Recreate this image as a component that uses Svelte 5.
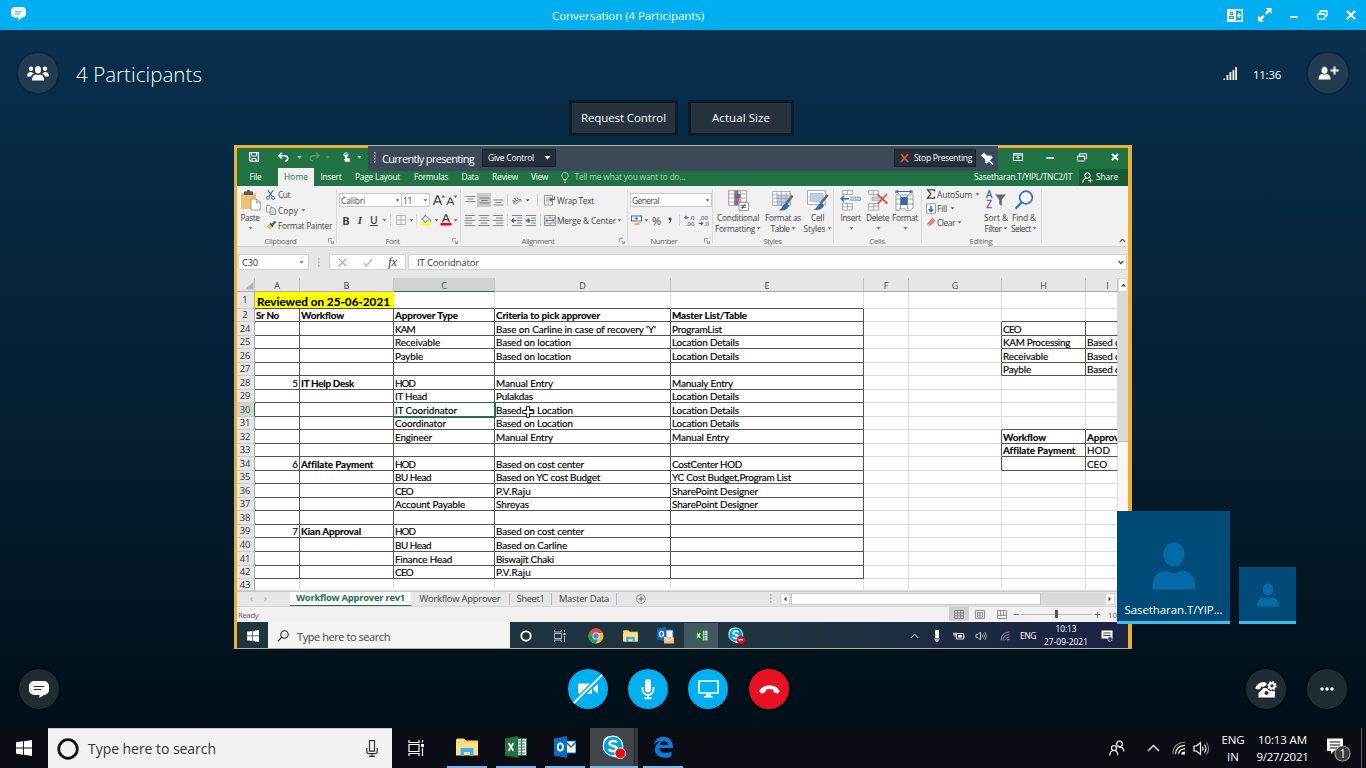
<script>
  // Spreads the letters of a label over a given width.
  function fit(node, width) {
    if (!width) return;
    const natural = node.getBoundingClientRect().width;
    node.style.letterSpacing = (width - natural) / node.textContent.length + 'px';
  }

  // name: [width, height, markup]
  const icons = {
    caret: [5, 3, '<path d="M.5.2h4L2.5 2.6z" fill="#666"/>'],
    caretW: [5, 3, '<path d="M.5.2h4L2.5 2.6z" fill="#fff"/>'],
    caretF: [5, 3, '<path d="M.5.2h4L2.5 2.6z" fill="#4f9470"/>'],
    caretL: [7, 4, '<path d="M.5 0h6L3.5 3.6z" fill="#fff"/>'],
    vsep: [1, 12, '<path d="M.5 0v12" stroke="#d8d8d8"/>'],
    launch: [6, 6, '<path d="M.5 4V.5H4M2.5 2.5l3 3M5.500 3v2.500H3" fill="none" stroke="#888" stroke-width=".8"/>'],
    save: [10, 10, '<path d="M.6.6h8.800v8.800H2L.6 8z" fill="none" stroke="#fff" stroke-width="1.200"/><path d="M2.500 1v3h5V1M3 9V6.500h4V9" fill="none" stroke="#fff"/>'],
    undo: [11, 10, '<path d="M4 .8 1 3.800l3 3M1.300 3.800H6c5 0 4.500 5 1 5.200" fill="none" stroke="#fff" stroke-width="1.600"/>'],
    redo: [11, 10, '<path d="M7 .8l3 3-3 3M9.700 3.800H5C0 3.800.5 8.800 4 9" fill="none" stroke="#4f9470" stroke-width="1.400"/>'],
    touch: [9, 11, '<circle cx="4" cy="2.800" r="2" fill="none" stroke="#fff" stroke-width="1"/><path d="M3.200 2.500h1.600v3.300L8 6.600 7.500 10H3.500L1.500 7l1.700.3z" fill="#fff"/>'],
    ropt: [10, 8, '<path d="M.5.5h9v7h-9zM.5 2h9" fill="none" stroke="#fff"/><path d="M5 6.500V3.500M3.500 5 5 3.500 6.500 5" fill="none" stroke="#fff"/>'],
    min: [8, 8, '<path d="M0 5h8" stroke="#fff" stroke-width="1.500"/>'],
    rest: [10, 9, '<path d="M2.500 2.500V.8h7v4.700H7.500M.5 3h7v5h-7z" fill="none" stroke="#fff" stroke-width="1"/><path d="M.5 3.500h7" stroke="#fff"/>'],
    close: [8, 8, '<path d="M1 1l6 6M7 1 1 7" stroke="#fff" stroke-width="1.900"/>'],
    bulb: [8, 11, '<path d="M2.500 7.500C2.500 6 .8 5.500.8 3.700a3.200 3.200 0 0 1 6.400 0C7.200 5.500 5.500 6 5.500 7.500zM2.700 8.900h2.600M3 10.300h2" fill="none" stroke="#a9d0b9" stroke-width=".9"/>'],
    share: [11, 11, '<circle cx="5.500" cy="3.500" r="2.700" fill="none" stroke="#fff"/><path d="M.8 10.500c0-3 2-4 4-4.300M6 8.500h4.500M8.200 6.300v4.500" fill="none" stroke="#fff"/>'],
    paste: [21, 21, '<path d="M1 3h15v16H1z" fill="#eec074"/><path d="M4 1.500h2.500L7.500 0h2l1 1.500H13V5H4z" fill="#5d5d5d"/><path d="M11 9h5.500l4 3.500V20H11z" fill="#fff" stroke="#8a8a8a" stroke-width=".8"/><path d="M16.300 9v3.700h4" fill="none" stroke="#8a8a8a" stroke-width=".8"/>'],
    cut: [9, 10, '<path d="M1.800.3 6.300 6.500M7.200.3 2.700 6.500" stroke="#555" stroke-width="1.100"/><circle cx="2" cy="7.800" r="1.500" fill="none" stroke="#3f78b5"/><circle cx="7" cy="7.800" r="1.500" fill="none" stroke="#3f78b5"/>'],
    copy: [10, 10, '<path d="M.5.5H4l1.500 1.500v5H.5z" fill="#fff" stroke="#6b88a8" stroke-width=".8"/><path d="M4.200 3H8l1.500 1.500v5H4.200z" fill="#fff" stroke="#4d7fb4" stroke-width=".8"/><path d="M5.300 5.500h3M5.300 7.300h3" stroke="#4d7fb4" stroke-width=".6"/>'],
    painter: [10, 9, '<path d="M9.500.5 6.500 3.500" stroke="#555" stroke-width="2"/><path d="M4 2.500 7 5.500" stroke="#444" stroke-width="1.800"/><path d="M3.500 3 6.300 6 4 8.500.3 5.500z" fill="#e9b36a"/>'],
    grow: [14, 12, '<path d="M1.500 11 5.200 2h.8L9.700 11M2.800 7.900h5.600" fill="none" stroke="#444" stroke-width="1.300"/><path d="M9.200 3.500h4L11.200 1z" fill="#2b6cb5"/>'],
    shrink: [12, 12, '<path d="M1 11 4 4h.8L7.800 11M2.200 8.500h4.400" fill="none" stroke="#444" stroke-width="1.200"/><path d="M7.500 1.500h4L9.500 4z" fill="#2b6cb5"/>'],
    comma: [4, 7, '<path d="M2 .5a1.400 1.400 0 0 1 1.500 1.600C3.500 4 2.500 5.500 1 6.500L.6 6C1.500 5.200 2 4.300 2 3.400A1.400 1.400 0 0 1 2 .5z" fill="#444"/>'],
    bord: [10, 10, '<path d="M.5.5h9v9h-9zM5 .5v9M.5 5h9" fill="none" stroke="#aaa" stroke-width=".8"/>'],
    fill: [12, 12, '<path d="M5.500 1.500 9.500 5 5.500 8.500 2 5z" fill="#fff" stroke="#666" stroke-width=".9"/><path d="M5 .5v3" stroke="#666" stroke-width=".8"/><path d="M10.300 4.500 11.300 7.500h-1.600z" fill="#3f78b5"/><path d="M.5 9h11v2.500H.5z" fill="#ff0"/>'],
    fcol: [12, 12, '<path d="M2.500 8.300 5.500 1h1L9.500 8.300M3.700 5.600h4.600" fill="none" stroke="#444" stroke-width="1.300"/><path d="M.5 9h11v2.500H.5z" fill="#f00"/>'],
    vtop: [11, 11, '<path d="M.5 1.500h10M2.500 4h6M.5 6.500h10" stroke="#777" fill="none" stroke-width=".9"/>'],
    vmid: [11, 11, '<path d="M.5 3h10M2.500 5.500h6M.5 8h10" stroke="#777" stroke-width=".9"/>'],
    vbot: [11, 11, '<path d="M.5 5h10M2.500 7.500h6M.5 10h10" stroke="#777" stroke-width=".9"/>'],
    al: [10, 11, '<path d="M0 .5h10M0 3h7M0 5.500h10M0 8h7M0 10.500h10" stroke="#777" stroke-width=".9"/>'],
    ac: [10, 11, '<path d="M0 .5h10M1.500 3h7M0 5.500h10M1.500 8h7M0 10.500h10" stroke="#777" stroke-width=".9"/>'],
    ar: [10, 11, '<path d="M0 .5h10M3 3h7M0 5.500h10M3 8h7M0 10.500h10" stroke="#777" stroke-width=".9"/>'],
    orient: [10, 10, '<text x="0" y="7" font-size="6.500" transform="rotate(-40 4 6)" fill="#444" font-family="Open Sans">ab</text><path d="M3.500 9.500 9 4.500M9 7V4.500H6.500" fill="none" stroke="#777" stroke-width=".8"/>'],
    indo: [12, 11, '<path d="M1 .5h10M6 3h5M6 5.500h5M6 8h5M1 10.500h10" stroke="#777" stroke-width=".9"/><path d="M4.800 5.500H1M2.700 3.500.8 5.500l1.900 2" fill="none" stroke="#2b6cb5" stroke-width="1.300"/>'],
    indi: [12, 11, '<path d="M1 .5h10M6 3h5M6 5.500h5M6 8h5M1 10.500h10" stroke="#777" stroke-width=".9"/><path d="M.5 5.500h4M2.700 3.500l1.900 2-1.900 2" fill="none" stroke="#2b6cb5" stroke-width="1.300"/>'],
    wrap: [12, 11, '<path d="M.5.5h8v9.500h-8zM2 3h5M2 5h5M2 7h3" fill="#fff" stroke="#777" stroke-width=".8"/><path d="M10.500 1.500v3H6M7.700 3 6 4.500l1.700 2" fill="none" stroke="#2b6cb5" stroke-width="1.200"/>'],
    merge: [12, 11, '<path d="M.5.5h11v10H.5zM.5 3h11M.5 8h11M6 .5V3M6 8v2.500" fill="#fff" stroke="#777" stroke-width=".8"/><path d="M2 5.500h8M3.500 4 2 5.500 3.500 7M8.500 4 10 5.500 8.500 7" fill="none" stroke="#2b6cb5" stroke-width=".9"/>'],
    money: [12, 11, '<path d="M.5 1h10v5H.5z" fill="#fff" stroke="#2b6cb5" stroke-width="1.200"/><circle cx="5.500" cy="3.500" r="1.300" fill="#2b6cb5"/><ellipse cx="8.500" cy="6.500" rx="2.500" ry="1.100" fill="#eeb65f"/><ellipse cx="6" cy="9" rx="3" ry="1.300" fill="#eeb65f"/>'],
    dinc: [12, 11, '<path d="M.8 2.500h4M2.500 1 .8 2.500 2.500 4" fill="none" stroke="#2b6cb5" stroke-width="1.100"/><text x="5.500" y="5" font-size="6" fill="#222" font-family="Open Sans">.0</text><text x="2" y="10.500" font-size="6" fill="#222" font-family="Open Sans">.00</text>'],
    ddec: [12, 11, '<path d="M.5 8.500h4M3 7l1.700 1.500L3 10" fill="none" stroke="#2b6cb5" stroke-width="1.100"/><text x="1.500" y="5" font-size="6" fill="#222" font-family="Open Sans">.00</text><text x="6" y="10.500" font-size="6" fill="#222" font-family="Open Sans">.0</text>'],
    cond: [21, 21, '<path d="M.5.5h18v15H.5zM.5 4h18M.5 8h18M.5 12h18M6.500.5v15M12.500.5v15" fill="#fff" stroke="#999" stroke-width=".8"/><path d="M6.500.5h4v3.500h-4zM6.500 8h5v4h-5z" fill="#e0563a"/><path d="M6.500 4h6v4h-6zM6.500 12h4v3h-4z" fill="#3f78c5"/><path d="M11 12.500h9.500v8H11z" fill="#fff" stroke="#888" stroke-width=".8"/><path d="M13 15.500h5M13 17.500h5M17 13.800l-3 5.500" stroke="#444" stroke-width=".8"/>'],
    ftab: [22, 21, '<path d="M.5 1.500h18v14H.5z" fill="#fff"/><path d="M5 5h13.500v10.500H5z" fill="#b8d0ea"/><path d="M.5 1.500h18v14H.5zM.5 5h18M.5 8.500h18M.5 12h18M5 1.500v14M9.500 1.500v14M14 1.500v14" fill="none" stroke="#999" stroke-width=".7"/><path d="M20.500 5.500 14 14" stroke="#666" stroke-width="2.600"/><path d="M14 13l3 2.500c-1 4-5 5.500-10.500 5C10 19 11 14 14 13z" fill="#2b6cb5"/>'],
    cell: [22, 21, '<path d="M.5.5h18v14H.5z" fill="#fff" stroke="#999" stroke-width=".8"/><path d="M3 3.500h13v8H3z" fill="#b8d0ea" stroke="#9ab" stroke-width=".6"/><path d="M20.500 5 14 13" stroke="#666" stroke-width="2.600"/><path d="M14 12.500l3 2.500c-1 4-5 5.500-10.500 5C10 18.500 11 13.500 14 12.500z" fill="#2b6cb5"/>'],
    ins: [21, 21, '<path d="M2.500.5h10v4h-10zM7.500.5v4M2.500 13.500h10v6.500h-10zM2.500 16.700h10M7.500 13.500V20" fill="#fff" stroke="#999" stroke-width=".8"/><path d="M10.500 7h10v3.500h-10zM15.500 7v3.500" fill="#b8d0ea" stroke="#8aa" stroke-width=".7"/><path d="M9 8.800H1.500M4 6 1.200 8.800 4 11.500" fill="none" stroke="#2b6cb5" stroke-width="1.400"/>'],
    del: [21, 21, '<path d="M1.500.5h10v4h-10zM6.500.5v4M1.500 13.500h10v6.500h-10zM1.500 16.700h10M6.500 13.500V20" fill="#fff" stroke="#999" stroke-width=".8"/><path d="M5 7h10v3.500H5z" fill="#b8d0ea" stroke="#8aa" stroke-width=".7"/><path d="M10.500 4.500l10 9M20 4l-9.500 10" stroke="#d9532c" stroke-width="1.700"/>'],
    fmt: [20, 21, '<path d="M1.500 1.500h15M1 0v3.500M17 0v3.500M3.500 0 1.500 1.700l2 1.700M14.500 0l2 1.700-2 1.700" fill="none" stroke="#2b6cb5" stroke-width="1"/><path d="M1 5h17v13l-3 2.500H11L10 19H5l-1 1.500H1zM1 9h17M1 14h17M5.500 5v14M12.500 5v14" fill="#fff" stroke="#888" stroke-width=".8"/><path d="M5.500 7h7v8h-7z" fill="#2b6cb5"/>'],
    sum: [10, 10, '<path d="M8.500 2.500V.8H1.500L5 5 1.500 9.200h7V7.500" fill="none" stroke="#444" stroke-width="1.300"/>'],
    filld: [10, 11, '<path d="M.5.8h9v9.500h-9z" fill="#fff" stroke="#888" stroke-width=".8"/><path d="M5 3v5.500M2.800 6 5 8.500 7.200 6" fill="none" stroke="#2b6cb5" stroke-width="1.500"/>'],
    clr: [11, 10, '<path d="M1 6.500 6.500.8l3.200 2.700-5.500 5.700H2.500z" fill="#e8818d"/><path d="M1 6.500l3 2.700" stroke="#fff" stroke-width=".7"/>'],
    sort: [22, 19, '<text x="1" y="8" font-size="10" fill="#2b6cb5" stroke="#2b6cb5" stroke-width=".3" font-family="Open Sans">A</text><text x="1.300" y="18" font-size="10" fill="#8b4fae" stroke="#8b4fae" stroke-width=".3" font-family="Open Sans">Z</text><path d="M10 4.500h11l-4.200 5V16l-2.600-2V9.500z" fill="#666"/>'],
    find: [20, 20, '<circle cx="12" cy="7.500" r="6.300" fill="#fff" stroke="#2b74c0" stroke-width="1.700"/><path d="M7.500 12.500 1.500 18.700" stroke="#2b74c0" stroke-width="2.300"/>'],
    up: [7, 5, '<path d="M.8 4 3.500 1.200 6.200 4" fill="none" stroke="#555" stroke-width="1.100"/>'],
    x: [9, 9, '<path d="M1 1l7 7M8 1 1 8" stroke="#aaa" stroke-width="1.100"/>'],
    chk: [10, 9, '<path d="M.8 5l2.500 3L9.200 1" fill="none" stroke="#bbb" stroke-width="1.500"/>'],
    chev: [6, 5, '<path d="M.7 1 3 3.600 5.300 1" fill="none" stroke="#555" stroke-width="1.400"/>'],
    dots: [2, 9, '<path d="M0 0h1.500v1.500H0zM0 3.500h1.500V5H0zM0 7h1.500v1.500H0z" fill="#aaa"/>'],
    dotsW: [2, 12, '<path d="M0 0h1.500v1.500H0zM0 3h1.500v1.500H0zM0 6h1.500v1.500H0zM0 9h1.500v1.500H0z" fill="#c8ced4"/>'],
    xred: [9, 10, '<path d="M1 1l7 8M8 1 1 9" stroke="#e8532f" stroke-width="1.700"/>'],
    pin: [14, 13, '<path d="M4 .5 7 3.500l4.500.2 1 2-5.500 5.800-1.700-.8L5.200 7.500 1 3.500z" fill="#fff"/><path d="M9 8.500l4 4" stroke="#fff" stroke-width="1.500"/>'],
    aL: [4, 6, '<path d="M3.500.5 1 3l2.500 2.500z" fill="#bbb"/>'],
    aR: [4, 6, '<path d="M.5.5 3 3 .5 5.500z" fill="#bbb"/>'],
    dL: [4, 6, '<path d="M3.500.5 1 3l2.500 2.500z" fill="#444"/>'],
    dR: [4, 6, '<path d="M.5.5 3 3 .5 5.500z" fill="#444"/>'],
    dU: [7, 4, '<path d="M.8 3.600h5.400L3.500.6z" fill="#555"/>'],
    plus: [10, 10, '<circle cx="5" cy="5" r="4.300" fill="none" stroke="#777" stroke-width=".8"/><path d="M5 2.500v5M2.500 5h5" stroke="#666" stroke-width="1"/>'],
    vgrid: [10, 9, '<path d="M.5.5h9v8h-9zM.5 3.200h9M.5 5.800h9M3.500.5v8M6.500.5v8" fill="none" stroke="#777" stroke-width=".8"/>'],
    vpage: [10, 9, '<path d="M.5.5h9v8h-9zM2.500 2.500h5v4.500h-5zM3.700 4h2.500M3.700 5.500h2.500" fill="none" stroke="#777" stroke-width=".8"/>'],
    vbrk: [10, 9, '<path d="M.5.5h9v8h-9zM3.500.5v5M6.500.5v5M.5 5.500h9" fill="none" stroke="#777" stroke-width=".8"/>'],
    win: [12, 12, '<path d="M0 1.700 5.200 1v4.600H0zM5.900.9 12 0v5.600H5.900zM0 6.300h5.200V11L0 10.200zM5.900 6.300H12V12l-6.100-.9z" fill="#fff"/>'],
    mag: [12, 12, '<circle cx="7.500" cy="4.500" r="3.700" fill="none" stroke="#222" stroke-width="1.100"/><path d="M4.800 7.200.8 11.300" stroke="#222" stroke-width="1.200"/>'],
    ring: [12, 12, '<circle cx="6" cy="6" r="4.700" fill="none" stroke="#fff" stroke-width="1.800"/>'],
    ringB: [22, 22, '<circle cx="11" cy="11" r="9.300" fill="none" stroke="#111" stroke-width="2.800"/>'],
    tview: [12, 12, '<path d="M.5 0v2h7V0M.5 3.500h7v5h-7zM.5 12v-2h7v2M10.500 0v2M10.500 5.500V12" fill="none" stroke="#c3ccd0" stroke-width=".9"/><path d="M9.500 3h2v2h-2z" fill="#c3ccd0"/>'],
    tviewB: [17, 16, '<path d="M1 0v2.500h10V0M1 4.500h10v7H1zM1 16v-2.500h10V16M14.500 0v2.500M14.500 8v8" fill="none" stroke="#fff" stroke-width="1.200"/><path d="M13 4h3v3h-3z" fill="#fff"/>'],
    chrome: [16, 16, '<circle cx="8" cy="8" r="7.500" fill="#e5c33d"/><path d="M8 .5A7.500 7.500 0 0 0 1.500 4.200L5 10l3-5h6.900A7.500 7.500 0 0 0 8 .5z" fill="#dd4b3e"/><path d="M1.500 4.200A7.500 7.500 0 0 0 7.500 15.500L11 10H5z" fill="#1c9d58"/><circle cx="8" cy="8" r="3.500" fill="#fff"/><circle cx="8" cy="8" r="2.700" fill="#4385f0"/>'],
    folder: [22, 18, '<path d="M0 2.500C0 1 .5.500 2 .500h6l2 2h12V17H0z" fill="#f9d36b"/><path d="M1 3h7" stroke="#fff2c0"/><path d="M0 5h22v12.500H0z" fill="#fde08d"/><path d="M4.500 10h13v8H14v-4H8v4H4.500z" fill="#3fb1ea"/>'],
    excel: [22, 22, '<path d="M12 2.500h9.500v17H12z" fill="#fff" stroke="#217346"/><path d="M12 5h8M12 8h8M12 11h8M12 14h8M12 17h8M16.500 3v16" stroke="#217346" stroke-width="1"/><path d="M0 2.500 13 0v22L0 19.500z" fill="#217346"/><path d="M3.500 7l5 8M8.500 7l-5 8" stroke="#fff" stroke-width="1.700"/>'],
    outlook: [22, 22, '<path d="M12 5h10v12H12z" fill="#fff" stroke="#0f6cbd"/><path d="M12 6l5 5 5-5" fill="none" stroke="#0f6cbd" stroke-width="1.500"/><path d="M0 2.500 13 0v22L0 19.500z" fill="#0b6cc4"/><ellipse cx="6.300" cy="11" rx="2.600" ry="3.700" fill="none" stroke="#fff" stroke-width="1.700"/>'],
    outmail: [17, 17, '<path d="M9 3h7v8H9z" fill="#fff" stroke="#0f6cbd"/><path d="M0 1.500 9 0v14L0 12.500z" fill="#0b6cc4"/><ellipse cx="4.500" cy="7" rx="2" ry="2.700" fill="none" stroke="#fff" stroke-width="1.300"/><path d="M7 10h10v6.500H7z" fill="#f0bd7a"/><path d="M7 10l5 4 5-4" fill="none" stroke="#fff"/>'],
    skype: [24, 24, '<circle cx="8" cy="8" r="7" fill="#e8f7fd"/><circle cx="14" cy="15" r="7.500" fill="#e8f7fd"/><circle cx="11" cy="11" r="9.800" fill="#00a2e3" stroke="#e8f7fd" stroke-width="1.200"/><path d="M15 7.500c-1-2-7.500-2.500-7.500 1 0 3.500 7.300 1.500 7.300 5.200 0 3.500-6.800 3-8 .3" fill="none" stroke="#fff" stroke-width="2.400"/><circle cx="18.300" cy="18.300" r="5.300" fill="#e50d18" stroke="#fff" stroke-width=".8"/>'],
    skyped: [24, 24, '<circle cx="8" cy="8" r="7" fill="#e8f7fd"/><circle cx="14" cy="15" r="7.500" fill="#e8f7fd"/><circle cx="11" cy="11" r="9.800" fill="#00a2e3" stroke="#e8f7fd" stroke-width="1.200"/><path d="M15 7.500c-1-2-7.500-2.500-7.500 1 0 3.500 7.300 1.500 7.300 5.200 0 3.500-6.800 3-8 .3" fill="none" stroke="#fff" stroke-width="2.400"/><circle cx="18" cy="18" r="5.500" fill="#e50d18"/><path d="M15 18h6" stroke="#fff" stroke-width="2"/>'],
    edge: [22, 22, '<path d="M1.500 9C3 3 7.500.8 11.500.8c6 0 9.500 4.500 9.500 11.200H7.500c0 5.500 7 6 12 3.500v4.700C13 23.500 3 21.500 3 13.500c0-4 2.500-7 6-8.300-4-.5-6.500 2-7.500 3.800zM7.700 9h8.600c.2-5-7.800-5-8.600 0z" fill="#0c7bd8"/>'],
    upW: [13, 8, '<path d="M1 7l5.500-5.500L12 7" fill="none" stroke="#fff" stroke-width="1.300"/>'],
    upS: [9, 6, '<path d="M.8 5 4.500 1.200 8.200 5" fill="none" stroke="#ddd" stroke-width="1"/>'],
    micS: [8, 12, '<path d="M2 0h4v8H2z" fill="#fff"/><path d="M1 8.500h6L5 12H3z" fill="#bbb"/>'],
    bat: [12, 8, '<path d="M3.500 1.500h7v5.500h-7zM11 3v2.500" fill="none" stroke="#ddd"/><path d="M5 3h4v2.500H5z" fill="#fff"/><path d="M0 2h4M1 .5v3M3 .5v3M2 3.500V5" stroke="#ddd"/>'],
    vol: [12, 10, '<path d="M1 3.500h2L5.500 1v8L3 6.500H1z" fill="none" stroke="#ddd" stroke-width=".9"/><path d="M7 3.500q1 1.500 0 3M8.500 2.200q2 2.800 0 5.600M10 1q3 4 0 8" fill="none" stroke="#bbb" stroke-width=".8"/>'],
    volB: [17, 15, '<path d="M1 5h2.500L7.500 1.500v12L3.500 10H1z" fill="none" stroke="#fff" stroke-width="1.200"/><path d="M9.500 5.500q1.300 2 0 4M11.500 3.500q3 4 0 8" fill="none" stroke="#fff" stroke-width="1.100"/><path d="M13.500 1.500q4 6 0 12" fill="none" stroke="#888" stroke-width="1.100"/>'],
    wifi: [10, 10, '<path d="M1 9.500Q1 1.500 9.500 1M3 9.500Q3 4 9.500 3.500M5 9.500Q5.500 6.500 9.500 6M7 9.500q.3-1 2.500-1" fill="none" stroke="#aab" stroke-width=".8"/>'],
    wifiB: [14, 14, '<path d="M1 13Q1 2 13 1.200" fill="none" stroke="#999" stroke-width="1.100"/><path d="M3.500 13Q4 5 13 4.400M6.500 13Q7 8.300 13 7.600" fill="none" stroke="#fff" stroke-width="1.200"/><path d="M9 13.500q.5-3 4-3v3z" fill="#fff"/>'],
    notS: [12, 12, '<path d="M.5.500h11v8H9v3L6 8.500H.5z" fill="#fff"/><path d="M2.500 3h7M2.500 5.500h7" stroke="#223" stroke-width=".9"/><circle cx="9" cy="9" r="2.300" fill="#38405c" stroke="#ccd" stroke-width=".7"/>'],
    notB: [26, 24, '<path d="M0 .5h16v12.500H7L4 16v-3H0z" fill="#fff"/><path d="M3 4h10M3 7h10M3 10h7" stroke="#111" stroke-width="1.200"/><circle cx="15.500" cy="15.500" r="7.500" fill="#3a3c40" stroke="#999" stroke-width="1.200"/><text x="12.200" y="20" font-size="12" fill="#fff" font-family="Open Sans">1</text>'],
    mic: [12, 17, '<path d="M3.500.7h5v10.500h-5z" fill="none" stroke="#333" stroke-width="1.200"/><path d="M.8 8v3.500q0 2.200 2.500 2.200h5.400q2.500 0 2.500-2.200V8M6 13.700V16M3 16.300h6" fill="none" stroke="#333" stroke-width="1.200"/>'],
    people: [16, 16, '<circle cx="10.500" cy="4" r="2.800" fill="none" stroke="#fff" stroke-width="1.200"/><circle cx="5" cy="8" r="2.500" fill="none" stroke="#fff" stroke-width="1.200"/><path d="M.8 15.500c0-3 1.700-5 4.200-5s3.700 2.500 3.800 4.500M9.500 7c3.500-.5 5 1.500 5.500 4.500" fill="none" stroke="#fff" stroke-width="1.200"/>'],
    chat: [15, 14, '<path d="M4 0h7a4 4 0 0 1 4 4v2.500a4 4 0 0 1-3.500 4L7.500 13.500v-3H4a4 4 0 0 1-4-4V4a4 4 0 0 1 4-4z" fill="#fff"/><path d="M4 4.800h6.500M4 7h4.500" stroke="#00aff0" stroke-width="1"/>'],
    chatB: [20, 17, '<path d="M5 0h10a5 5 0 0 1 5 5v4c0 3-2 4.500-5 5L10.500 17v-3H5a5 5 0 0 1-5-5V5a5 5 0 0 1 5-5z" fill="#fff"/><path d="M5 5.500h10M5 8.500h7" stroke="#222c33" stroke-width="1.100"/>'],
    panel: [16, 13, '<path d="M.7.700h14.600v11.600H.7z" fill="none" stroke="#fff" stroke-width="1.400"/><path d="M0 0h9v13H0z" fill="#fff"/><path d="M3 3h3v3H3zM2 7h5v3H2z" fill="#00aff0"/><path d="M4 4h1v1H4zM3.500 8h2v1h-2z" fill="#fff"/><path d="M11 6.500h3M12.500 4.500l-2 2 2 2" fill="none" stroke="#fff" stroke-width="1.300"/>'],
    expand: [14, 14, '<path d="M7.500 0H13.500V6L11.500 4 8.700 6.700 7 5 9.700 2zM0 7.500l2 2L4.700 6.800l1.700 1.700L4 11.500l2 2H0z" fill="#fff"/>'],
    minB: [8, 8, '<path d="M0 6h8" stroke="#fff" stroke-width="2"/>'],
    restB: [11, 10, '<path d="M3 3V1h7v5H8.500M.7 4h7v5h-7z" fill="none" stroke="#fff" stroke-width="1.200"/><path d="M.5 4.300h7.500M3 1h7" stroke="#fff" stroke-width="1.600"/>'],
    closeB: [10, 10, '<path d="M.8.800l8.400 8.400M9.200.800.8 9.200" stroke="#fff" stroke-width="2.100"/>'],
    group: [22, 15, '<circle cx="4" cy="2.700" r="2.200" fill="#fff"/><circle cx="18" cy="2.700" r="2.200" fill="#fff"/><ellipse cx="11" cy="3.800" rx="3" ry="3.700" fill="#fff"/><path d="M0 10.500Q0 6 4 6l3 1.500Q4.500 8 4 10.500zM22 10.500Q22 6 18 6l-3 1.500q2.500.5 3 3zM5 14.500Q5 8.500 9 8.500q2 1.500 4 0 4 0 4 6z" fill="#fff"/>'],
    signal: [15, 15, '<path d="M.5 12.500h1.500v1.500H.5zM3.500 9h1.800v5H3.500zM6.500 6h1.800v8H6.500zM9.500 4h1.800v10H9.500zM12.300 1H14v13h-1.700z" fill="#fff"/>'],
    add: [21, 14, '<ellipse cx="6.500" cy="4.200" rx="3" ry="3.500" fill="#fff"/><path d="M.5 13.500Q.5 8 4.500 8q2 1.200 4 0 4 0 4 5.500z" fill="#fff"/><path d="M16.500.5v8M12.500 4.500h8" stroke="#fff" stroke-width="2"/>'],
    cam: [30, 30, '<path d="M5 10.500q0-1 1-1h10q3 0 3 3v6.500q0 1-1 1H8q-3 0-3-3zM20.500 13.500l4.500-3.500v9.500l-4.500-3.500z" fill="#fff"/><path d="M1 29.500 29 .8" stroke="#00aff0" stroke-width="5"/><path d="M.8 29 29 .8" stroke="#fff" stroke-width="1.900"/>'],
    micB: [14, 21, '<rect x="4" y="0" width="6" height="13.500" rx="3" fill="#fff"/><path d="M1.500 8v2.500a5.500 5.500 0 0 0 11 0V8M7 16v3" fill="none" stroke="#fff" stroke-width="1.700"/><path d="M3 19.300h8" stroke="#fff" stroke-width="1.800"/>'],
    screen: [21, 18, '<path d="M1 1h19v12H1z" fill="none" stroke="#fff" stroke-width="1.700"/><path d="M8 14h5v2h2v1.500H6V16h2z" fill="#fff"/>'],
    hang: [21, 9, '<path d="M.3 6.500C2 2 6 .5 10.500.5S19 2 20.700 6.500L18.500 8.700 14.500 7 14 4.500q-3.500-1-7 0L6.500 7l-4 1.700z" fill="#fff"/>'],
    phone: [22, 17, '<path d="M.5 7.500Q2 1 9 1l2.500 1v2.500L8 6 6.500 5.500 5 8 2 8.500z" fill="#fff"/><path d="M3.500 16.500V12L8.500 7H13q1 3 7 3v6.500z" fill="#fff"/><circle cx="11.500" cy="12" r="2" fill="#222c33"/><circle cx="17" cy="4.800" r="3.200" fill="none" stroke="#222c33" stroke-width="4.500"/><circle cx="17" cy="4.800" r="2.700" fill="none" stroke="#fff" stroke-width="2.200"/><circle cx="17" cy="4.800" r="4.100" fill="none" stroke="#fff" stroke-width="1.200" stroke-dasharray="1.600 1.600"/>'],
    more: [14, 4, '<circle cx="2" cy="2" r="1.700" fill="#fff"/><circle cx="7" cy="2" r="1.700" fill="#fff"/><circle cx="12" cy="2" r="1.700" fill="#fff"/>'],
    person: [44, 48, '<ellipse cx="22" cy="12.500" rx="10.600" ry="12" fill="#046ba8"/><path d="M.5 47.500C0 36 5 29 13 29q3 0 5.500 1.500 3.500 1 7 0Q28 29 31 29c8 0 13 7 12.500 18.500z" fill="#046ba8"/>'],
    cross: [12, 12, '<path d="M4.500.7h3v3.800h3.800v3H7.500v3.800h-3V7.500H.7v-3h3.800z" fill="#fff" stroke="#111" stroke-width="1"/>'],
  };

  const cols = [45, 94, 101, 176, 193, 45, 93, 84, 32];
  const letters = 'ABCDEFGHI'.split('');
  const ends = [309, 322];
  for (let i = 1; i <= 20; i++) ends.push(Math.min(591, Math.round(322 + 13.53 * i)));
  const heights = ends.map((e, i) => e - (i ? ends[i - 1] : 292));

  const rows = [
    [1],
    [2, 'Sr No', 'Workflow', 'Approver Type', 'Criteria to pick approver', 'Master List/Table'],
    [24, '', '', 'KAM', "Base on Carline in case of recovery 'Y'", 'ProgramList', '', '', 'CEO', ''],
    [25, '', '', 'Receivable', 'Based on location', 'Location Details', '', '', 'KAM Processing', 'Based on location'],
    [26, '', '', 'Payble', 'Based on location', 'Location Details', '', '', 'Receivable', 'Based on location'],
    [27, '', '', '', '', '', '', '', 'Payble', 'Based on location'],
    [28, '5', 'IT Help Desk', 'HOD', 'Manual Entry', 'Manualy Entry'],
    [29, '', '', 'IT Head', 'Pulakdas', 'Location Details'],
    [30, '', '', 'IT Cooridnator', 'Based on Location', 'Location Details'],
    [31, '', '', 'Coordinator', 'Based on Location', 'Location Details'],
    [32, '', '', 'Engineer', 'Manual Entry', 'Manual Entry', '', '', 'Workflow', 'Approver'],
    [33, '', '', '', '', '', '', '', 'Affilate Payment', 'HOD'],
    [34, '6', 'Affilate Payment', 'HOD', 'Based on cost center', 'CostCenter HOD', '', '', '', 'CEO'],
    [35, '', '', 'BU Head', 'Based on YC cost Budget', 'YC Cost Budget,Program List'],
    [36, '', '', 'CEO', 'P.V.Raju', 'SharePoint Designer'],
    [37, '', '', 'Account Payable', 'Shreyas', 'SharePoint Designer'],
    [38],
    [39, '7', 'Kian Approval', 'HOD', 'Based on cost center'],
    [40, '', '', 'BU Head', 'Based on Carline'],
    [41, '', '', 'Finance Head', 'Biswajit Chaki'],
    [42, '', '', 'CEO', 'P.V.Raju'],
    [43],
  ];

  const widths = {
    'Approver Type': 63, 'Criteria to pick approver': 104, 'Master List/Table': 75, 'Workflow': 43, 'Sr No': 23,
    "Base on Carline in case of recovery 'Y'": 160, 'Based on location': 75, 'Based on Location': 77,
    'Location Details': 67, 'IT Cooridnator': 62, 'IT Help Desk': 53, 'Affilate Payment': 72, 'Kian Approval': 60,
    'Manual Entry': 57, 'Manualy Entry': 61, 'Based on YC cost Budget': 104, 'Based on cost center': 88,
    'YC Cost Budget,Program List': 119, 'SharePoint Designer': 86, 'Account Payable': 70, 'KAM Processing': 67,
    'Receivable': 45, 'Engineer': 37, 'Coordinator': 51, 'Finance Head': 57, 'Biswajit Chaki': 58, 'BU Head': 36,
    'Based on Carline': 71, 'ProgramList': 50, 'CostCenter HOD': 70, 'IT Head': 32, 'Payble': 28, 'Pulakdas': 37,
    'Shreyas': 33, 'P.V.Raju': 35, 'HOD': 20, 'CEO': 18, 'KAM': 20,
  };

  function dark(n, c) {
    if (n === 1) return c < 5 ? 'db' : '';
    if (n === 43) return '';
    if (c < 5) return 'db dr';
    const boxed = (n >= 24 && n <= 27) || (n >= 32 && n <= 34);
    if (c === 6 && boxed) return 'dr';
    if (c === 7 && boxed) return 'db dr';
    if (c === 8 && boxed) return 'db';
    if (c > 6 && (n === 31 || n === 2)) return 'db';
    return '';
  }
  const bold = (n, c) => n === 2 || c === 1 || (c >= 7 && n === 32) || (c === 7 && n === 33);
</script>

{#snippet ic(name, w, h)}
  <svg class="ic" width={w ?? icons[name][0]} height={h ?? icons[name][1]} viewBox="0 0 {icons[name][0]} {icons[name][1]}">{@html icons[name][2]}</svg>
{/snippet}

{#snippet strip(items)}
  {#each items as [w, kind, tw, cls]}
    <span class="slot {cls ?? ''}" style:width="{w}px">
      {#if kind && icons[kind]}{@render ic(kind)}{:else if kind}<span class="t" use:fit={tw}>{kind}</span>{/if}
    </span>
  {/each}
{/snippet}

{#snippet big(w, icon, a, aw, b, bw)}
  <div class="big" style:width="{w}px">
    <div class="bigic">{@render ic(icon)}</div>
    <div class="ln"><span class="t" use:fit={aw}>{a}</span></div>
    <div class="ln">{#if b}<span class="t" use:fit={bw}>{b}</span>{/if}<i>{@render ic('caret')}</i></div>
  </div>
{/snippet}

<div class="app">
  <header class="titlebar">
    <span class="logo">{@render ic('chat')}</span>
    <span class="title"><span class="t" use:fit={152}>Conversation (4 Participants)</span></span>
    {@render strip([[30, 'panel'], [29, 'expand'], [29, 'minB'], [28, 'restB'], [30, 'closeB']])}
  </header>

  <main class="stage">
    <div class="top">
      <div class="round">{@render ic('group')}</div>
      <h1><span class="t" use:fit={126}>4 Participants</span></h1>
      <div class="sig">{@render ic('signal')}</div>
      <div class="clock"><span class="t" use:fit={28}>11:36</span></div>
      <div class="round">{@render ic('add')}</div>
    </div>

    <div class="actions">
      <button class="rc"><span class="t" use:fit={85}>Request Control</span></button>
      <button><span class="t" use:fit={58}>Actual Size</span></button>
    </div>

    <section class="share">
      <div class="present">
        {@render strip([[14, 'dotsW'], [92, 'Currently presenting', 92, 'big11'], [8]])}
        <div class="pbtn">{@render strip([[56, 'Give Control', 46], [16, 'caretL']])}</div>
        <div class="grow"></div>
        <div class="pbtn">{@render strip([[19, 'xred'], [61, 'Stop Presenting', 58, 'l']])}</div>
        {@render strip([[22, 'pin']])}
      </div>

      <div class="xl">
        <div class="xtitle">
          {@render strip([[33, 'save'], [26, 'undo'], [2], [2, 'caretW'], [7], [14, 'redo'], [4], [4, 'caretF']])}
          {@render strip([[10], [14, 'touch'], [4], [5, 'caretW']])}
          <span class="grow"></span>
          {@render strip([[32, 'ropt'], [32, 'min'], [32, 'rest'], [3], [27, 'close']])}
        </div>
        <div class="xtabs">
          {@render strip([[37, 'File', 12], [4], [36, 'Home', 24, 'home'], [34, 'Insert', 21], [59, 'Page Layout', 45], [48, 'Formulas', 34], [30, 'Data', 17], [40, 'Review', 26], [29, 'View', 17], [22, 'bulb'], [108, 'Tell me what you want to do...', 111, 'tell']])}
          <span class="grow"></span>
          {@render strip([[98, 'Sasetharan.T/YIPL/TNC2/IT', 98], [7]])}
          <div class="sharebtn">{@render strip([[16, 'share'], [24, 'Share', 22]])}</div>
        </div>

        <div class="ribbon">
          <div class="grp" style:width="100px">
            <div class="body">
              <div class="big" style:width="26px">
                <div class="bigic">{@render ic('paste')}</div>
                <div class="ln"><span class="t" use:fit={19}>Paste</span></div>
                <div class="ln"><i>{@render ic('caret')}</i></div>
              </div>
              <div class="list three">
                <div>{@render strip([[15, 'cut'], [16, 'Cut', 12, 'l']])}</div>
                <div>{@render strip([[15, 'copy'], [22, 'Copy', 20, 'l'], [7, 'caret']])}</div>
                <div>{@render strip([[15, 'painter'], [56, 'Format Painter', 54, 'l']])}</div>
              </div>
            </div>
            <div class="cap la"><span class="t" use:fit={32}>Clipboard</span><b>{@render ic('launch')}</b></div>
          </div>

          <div class="grp" style:width="124px">
            <div class="body col">
              <div class="row">
                <span class="combo" style:width="63px"><span class="t" use:fit={24}>Calibri</span>{@render ic('caret')}</span>
                <span class="combo nb" style:width="28px"><span class="t" use:fit={9}>11</span>{@render ic('caret')}</span>
                {@render strip([[2], [14, 'grow'], [12, 'shrink']])}
              </div>
              <div class="row r2">
                {@render strip([[14, 'B', 0, 'bb'], [14, 'I', 0, 'ii'], [14, 'U', 0, 'uu'], [7, 'caret'], [4, 'vsep'], [18, 'bord'], [2, 'caret'], [8, 'vsep'], [12, 'fill'], [8, 'caret'], [12, 'fcol'], [6, 'caret']])}
              </div>
            </div>
            <div class="cap la"><span class="t" use:fit={14}>Font</span><b>{@render ic('launch')}</b></div>
          </div>

          <div class="grp" style:width="167px">
            <div class="body col">
              <div class="row">
                {@render strip([[14, 'vtop'], [14, 'vmid', 0, 'sel'], [14, 'vbot'], [4, 'vsep'], [16, 'orient'], [5, 'caret'], [14, 'vsep'], [12, 'wrap'], [1], [38, 'Wrap Text', 37, 'l']])}
              </div>
              <div class="row r2">
                {@render strip([[14, 'al'], [14, 'ac'], [14, 'ar'], [5, 'vsep'], [14, 'indo'], [14, 'indi'], [4, 'vsep'], [2], [12, 'merge'], [1], [60, 'Merge & Center', 59, 'l'], [5, 'caret']])}
              </div>
            </div>
            <div class="cap la"><span class="t" use:fit={33}>Alignment</span><b>{@render ic('launch')}</b></div>
          </div>

          <div class="grp" style:width="85px">
            <div class="body col">
              <div class="row"><span class="combo" style:width="82px"><span class="t" use:fit={27}>General</span>{@render ic('caret')}</span></div>
              <div class="row r2">
                {@render strip([[13, 'money'], [6, 'caret'], [15, '%', 0, 'pc'], [12, 'comma'], [7, 'vsep'], [14, 'dinc'], [14, 'ddec']])}
              </div>
            </div>
            <div class="cap la"><span class="t" use:fit={27}>Number</span><b>{@render ic('launch')}</b></div>
          </div>

          <div class="grp" style:width="121px">
            <div class="body">
              {@render big(50, 'cond', 'Conditional', 42, 'Formatting', 40)}
              {@render big(40, 'ftab', 'Format as', 36, 'Table', 19)}
              {@render big(29, 'cell', 'Cell', 13, 'Styles', 22)}
            </div>
            <div class="cap"><span class="t" use:fit={18}>Styles</span></div>
          </div>

          <div class="grp" style:width="88px">
            <div class="body pl">
              {@render big(27, 'ins', 'Insert', 20)}
              {@render big(27, 'del', 'Delete', 23)}
              {@render big(28, 'fmt', 'Format', 26)}
            </div>
            <div class="cap"><span class="t" use:fit={15}>Cells</span></div>
          </div>

          <div class="grp" style:width="120px">
            <div class="body">
              <div class="list ed">
                <div>{@render strip([[12, 'sum'], [38, 'AutoSum', 35, 'l'], [5, 'caret']])}</div>
                <div>{@render strip([[12, 'filld'], [13, 'Fill', 10, 'l'], [5, 'caret']])}</div>
                <div>{@render strip([[12, 'clr'], [20, 'Clear', 18, 'l'], [5, 'caret']])}</div>
              </div>
              {@render big(28, 'sort', 'Sort &', 24, 'Filter', 17)}
              {@render big(28, 'find', 'Find &', 24, 'Select', 20)}
            </div>
            <div class="cap"><span class="t" use:fit={23}>Editing</span></div>
          </div>
          <div class="collapse">{@render ic('up')}</div>
        </div>

        <div class="fbar">
          <div class="box nm"><span class="t" use:fit={16}>C30</span>{@render ic('caret')}</div>
          {@render strip([[20, 'dots']])}
          <div class="box">{@render strip([[25, 'x'], [25, 'chk'], [25, 'fx', 0, 'fx']])}</div>
          <div class="box fx-in"><span class="t" use:fit={62}>IT Cooridnator</span>{@render ic('chev')}</div>
        </div>

        <div class="sheet">
          <div class="cells">
            <div class="heads">
              <span class="corner"><svg width="10" height="9" viewBox="0 0 10 9"><path d="M9.500.5v8H1z" fill="#b4b4b4" /></svg></span>
              {#each letters as l, i}<span class="ch" class:on={l === 'C'} style:width="{cols[i]}px" class:last={l === 'I'}>{l}</span>{/each}
            </div>
            {#each rows as r, ri}
              <div class="grow-row" style:height="{heights[ri]}px">
                <span class="rh" class:on={r[0] === 30}>{r[0]}</span>
                {#if r[0] === 1}
                  <span class="cell review"><span class="t" use:fit={133}>Reviewed on 25-06-2021</span></span>
                {/if}
                {#each cols as w, c}
                  {#if !(r[0] === 1 && c < 2)}
                    <span class="cell {dark(r[0], c)}" class:b={bold(r[0], c)} class:num={c === 0 && r[0] > 2} class:cur={r[0] === 30 && c === 2} style:width="{w}px">
                      {#if r[c + 1]}<span class="t" use:fit={c === 8 ? (r[c + 1].startsWith('Based') ? 75 : 0) : widths[r[c + 1]]}>{r[c + 1]}</span>{/if}
                    </span>
                  {/if}
                {/each}
              </div>
            {/each}
          </div>
          <div class="vscroll"><span class="vbtn">{@render ic('dU')}</span><span class="vthumb"></span></div>
          <span class="pointer">{@render ic('cross')}</span>
        </div>

        <div class="stabs">
          {@render strip([[6], [15, 'aL'], [15, 'aR'], [17]])}
          {@render strip([[121, 'Workflow Approver rev1', 109, 'act'], [99, 'Workflow Approver', 81, 'sb'], [42, 'Sheet1', 28, 'sb'], [65, 'Master Data', 50, 'sb'], [47, 'plus']])}
          <span class="grow"></span>
          {@render strip([[2, 'dots'], [8]])}
          <div class="hs">
            <span class="hbtn">{@render ic('dL')}</span><span class="hthumb"></span><span class="grow"></span><span class="hbtn">{@render ic('dR')}</span>
          </div>
          {@render strip([[13]])}
        </div>

        <div class="status">
          <span class="t" use:fit={20}>Ready</span>
          <span class="grow"></span>
          {@render strip([[20, 'vgrid', 0, 'vsel'], [22, 'vpage'], [21, 'vbrk'], [9, '−', 0, 'zm']])}
          <span class="zoomline"><i></i></span>
          {@render strip([[11, '+', 0, 'zm'], [5]])}
          <span class="pct">100%</span>
        </div>

        <div class="xtask">
          {@render strip([[31, 'win']])}
          <div class="xsearch">{@render strip([[29, 'mag'], [93, 'Type here to search', 93, 'l']])}</div>
          {@render strip([[32, 'ring'], [35, 'tview'], [38, 'chrome']])}
          <span class="slot" style:width="31px">{@render ic('folder', 15, 12)}</span>
          {@render strip([[38, 'outmail']])}
          <span class="slot hot" style:width="34px">{@render ic('excel', 13, 13)}</span>
          <span class="slot" style:width="36px">{@render ic('skyped', 17, 17)}</span>
          <span class="grow"></span>
          {@render strip([[22, 'upS'], [23, 'micS'], [22, 'bat'], [22, 'vol'], [25, 'wifi'], [22, 'ENG', 16, 'tiny']])}
          <div class="xclock"><span class="t" use:fit={21}>10:13</span><span class="t" use:fit={44}>27-09-2021</span></div>
          {@render strip([[28, 'notS'], [7]])}
        </div>
      </div>
    </section>

    <div class="tiles">
      <div class="tile">
        {@render ic('person')}
        <div><span class="t" use:fit={98}>Sasetharan.T/YIP...</span></div>
      </div>
      <div class="tile small">{@render ic('person', 22, 24)}</div>
    </div>

    <div class="controls">
      <div class="round">{@render ic('chatB')}</div>
      <div class="mid">
        <div class="round blue">{@render ic('cam')}</div>
        <div class="round blue">{@render ic('micB')}</div>
        <div class="round blue">{@render ic('screen')}</div>
        <div class="round red">{@render ic('hang')}</div>
      </div>
      <div class="end">
        <div class="round">{@render ic('phone')}</div>
        <div class="round">{@render ic('more')}</div>
      </div>
    </div>
  </main>

  <footer class="taskbar">
    <span class="slot" style:width="48px">{@render ic('win', 16, 16)}</span>
    <div class="search">
      {@render strip([[40, 'ringB'], [284, 'Type here to search', 128, 'l'], [0, 'mic']])}
    </div>
    {@render strip([[49, 'tviewB'], [6]])}
    <span class="slot run" style:width="40px">{@render ic('folder')}</span>
    <span class="slot run" style:width="40px">{@render ic('excel')}</span>
    <span class="slot run near" style:width="40px">{@render ic('outlook')}</span>
    <span class="slot run act2">{@render ic('skype')}</span>
    <span class="slot run" style:width="40px">{@render ic('edge')}</span>
    <span class="grow"></span>
    {@render strip([[36, 'people'], [36, 'upW'], [15, 'wifiB'], [30, 'volB']])}
    <div class="two lang"><span class="t" use:fit={23}>ENG</span><span class="t" use:fit={12}>IN</span></div>
    <div class="two time"><span class="t" use:fit={49}>10:13 AM</span><span class="t" use:fit={52}>9/27/2021</span></div>
    <span class="slot note">{@render ic('notB')}</span>
    <span class="desk"></span>
  </footer>
</div>

<style>
  :global(body) { margin: 0; background: #00101a; }
  .app { width: 1366px; height: 768px; display: flex; flex-direction: column; overflow: hidden; font-family: "Open Sans", "Noto Sans", sans-serif; color: #fff; }
  .app * { box-sizing: border-box; }
  .ic { display: block; flex: none; }
  .t { white-space: nowrap; flex: none; }
  .grow { flex: 1; }
  .slot { display: flex; align-items: center; justify-content: center; flex: none; white-space: nowrap; height: 100%; }
  .slot.l { justify-content: flex-start; }

  .titlebar { height: 30px; background: #00aff0; display: flex; align-items: center; flex: none; }
  .logo { width: 360px; padding: 0 0 3px 11px; }
  .title { flex: 1; font-size: 11.5px; padding-left: 192px; }

  .stage { height: 698px; position: relative; display: flex; flex-direction: column; background: linear-gradient(#0a3050 0, #072a45 110px, #051f33 380px, #02131e 620px, #000f18 698px); }
  .top { height: 70px; display: flex; align-items: flex-start; padding: 23px 18px 0; }
  .round { width: 40px; height: 40px; border-radius: 50%; background: #233b51; display: flex; align-items: center; justify-content: center; box-shadow: 0 0 0 2px rgba(0, 20, 40, .25); flex: none; }
  h1 { margin: 6px 0 0 18px; font: 300 20.500px/30px "Open Sans", sans-serif; flex: 1; }
  .sig { padding: 13px 0 0; width: 30px; }
  .clock { font-size: 11.500px; line-height: 16px; padding-top: 14px; width: 55px; }
  .actions { display: flex; gap: 10px; padding-left: 569px; height: 45px; }
  .actions button { width: 106px; height: 36px; background: #26333f; border: 3px solid #0e1b28; color: #fff; font: 11.500px "Open Sans", sans-serif; padding: 0 0 2px; display: flex; align-items: center; justify-content: center; }
  .actions button.rc { width: 109px; }

  .share { position: relative; margin-left: 234px; width: 898px; height: 504px; padding: 2px 3px 1px 2px; background: #ffae0e; border: 1px solid #b9b39a; flex: none; }
  .present { position: absolute; left: 133px; top: 0; width: 630px; height: 25px; background: #3c4a57; display: flex; align-items: center; padding-bottom: 1px; border-radius: 0 0 3px 3px; font-size: 8.600px; }
  .present :global(.big11) { font-size: 11px; }
  .pbtn { height: 18px; background: #23303b; border: 1px solid #15202a; display: flex; align-items: center; }
  .xl { width: 891px; height: 500px; display: flex; flex-direction: column; background: #e6e6e6; overflow: hidden; color: #444; font-size: 8.400px; }
  .xtitle { height: 20px; background: #217346; display: flex; align-items: center; padding-bottom: 2px; flex: none; }
  .xtabs { height: 18px; background: #217346; display: flex; align-items: center; color: #fff; flex: none; }
  .xtabs .t { margin-top: -1px; }
  .xtabs .home { background: #f1f1f1; color: #217346; }
  .xtabs .tell { color: #a9d0b9; }
  .sharebtn { background: #185c37; height: 17px; width: 49px; display: flex; }

  .ribbon { height: 61px; flex: none; background: #f1f1f1; display: flex; border-bottom: 1px solid #d2d2d2; }
  .grp { display: flex; flex-direction: column; position: relative; flex: none; }
  .grp::after { content: ""; position: absolute; right: 0; top: 3px; bottom: 3px; width: 1px; background: #dadada; }
  .body { height: 49px; display: flex; flex: none; }
  .body.col { flex-direction: column; padding: 7px 0 0 2px; }
  .body.pl { padding-left: 3px; }
  .cap { height: 12px; display: flex; align-items: center; justify-content: center; font-size: 7.700px; color: #666; position: relative; padding: 1px 2px 0 0; }
  .cap.la { padding-right: 13px; }
  .cap b { position: absolute; right: 3px; top: 3px; }
  .big { display: flex; flex-direction: column; align-items: center; flex: none; }
  .bigic { height: 27px; padding-top: 4px; }
  .ln { height: 10.500px; line-height: 10.500px; display: flex; align-items: center; }
  .ln i { margin-left: 1px; }
  .list { display: flex; flex-direction: column; flex: none; }
  .list div { height: 15.500px; display: flex; align-items: center; }
  .three { padding: 1px 0 0 0; }
  .list.ed { width: 60px; padding: 1px 0 0 3px; }
  .list.ed div { height: 14px; }
  .row { height: 14px; display: flex; align-items: center; }
  .r2 { margin-top: 6px; }
  .combo { height: 14px; background: #fff; border: 1px solid #c6c6c6; display: flex; align-items: center; justify-content: space-between; padding: 0 1px; flex: none; }
  .combo.nb { border-left: 0; }
  .row .bb { font-weight: 700; font-size: 11px; }
  .row .ii { font: italic 700 11px "Liberation Serif", serif; }
  .row .uu { font-size: 10.500px; font-weight: 600; text-decoration: underline; }
  .row .pc { font-size: 11px; }
  .row .sel { background: #c9c9c9; }
  .collapse { flex: 1; display: flex; align-items: flex-end; justify-content: flex-end; padding: 0 2px 3px 0; }

  .fbar { height: 31px; flex: none; display: flex; align-items: center; padding: 0 1px 1px; }
  .box { height: 16px; background: #fff; border: 1px solid #d0d0d0; display: flex; align-items: center; font-size: 9.500px; color: #333; }
  .nm { width: 71px; justify-content: space-between; padding: 0 4px 0 3px; }
  .nm .t { font-size: 9.300px; }
  .box .fx { font: italic 12px "Liberation Serif", serif; }
  .fx-in { flex: 1; margin-left: 2px; justify-content: space-between; padding: 0 2px 0 8px; }

  .sheet { height: 313px; flex: none; display: flex; position: relative; }
  .cells { width: 881px; height: 313px; overflow: hidden; background: #fff; color: #111; }
  .heads { height: 14px; display: flex; background: #e6e6e6; border-bottom: 1px solid #ababab; font-size: 9px; color: #444; }
  .corner { width: 18px; display: flex; padding: 3px 0 0 7px; border-right: 1px solid #c4c4c4; flex: none; }
  .ch { text-align: center; line-height: 15px; border-right: 1px solid #c4c4c4; flex: none; }
  .ch.last { padding-left: 12px; }
  .ch.on { background: #d2d2d2; color: #217346; border-bottom: 1px solid #217346; height: 14px; }
  .grow-row { display: flex; }
  .rh { width: 18px; flex: none; background: #e6e6e6; border-right: 1px solid #ababab; border-bottom: 1px solid #cdcdcd; font-size: 9.400px; display: flex; align-items: center; justify-content: center; line-height: 10px; color: #333; padding-right: 1px; }
  .rh.on { background: #d2d2d2; color: #217346; border-right: 1px solid #217346; }
  .cell { flex: none; border-right: 1px solid #dcdcdc; border-bottom: 1px solid #dcdcdc; font: 9.900px/12px Lato, "Open Sans", sans-serif; color: #000; display: flex; align-items: center; padding-left: 1px; overflow: hidden; -webkit-text-stroke: .15px #000; }
  .cell.db { border-bottom-color: #555; }
  .cell.dr { border-right-color: #555; }
  .cell.b { font-weight: 700; }
  .cell.num { justify-content: flex-end; padding-right: 1px; }
  .cell.cur { box-shadow: 0 0 0 1px #217346; border-color: #217346; z-index: 1; }
  .cell.review { width: 139px; background: #ff0; font-size: 11.700px; font-weight: 700; border-bottom-color: #555; border-right: 0; padding: 1px 0 0 2px; }
  .vscroll { width: 10px; background: #f7f7f7; display: flex; flex-direction: column; }
  .vbtn { height: 14px; background: #fff; border: 1px solid #d5d5d5; display: flex; align-items: center; justify-content: center; }
  .vthumb { height: 150px; background: #dadada; border-bottom: 1px solid #bbb; }
  .pointer { position: absolute; left: 285px; top: 128px; }

  .stabs { height: 15px; flex: none; display: flex; align-items: center; border-top: 1px solid #c6c6c6; font-size: 9.400px; }
  .stabs .slot { line-height: 12px; padding-bottom: 1px; }
  .stabs .act { background: #fff; color: #217346; font-weight: 700; border-bottom: 1px solid #217346; }
  .stabs .sb { border-right: 1px solid #bbb; height: 12px; }
  .hs { width: 335px; height: 12px; display: flex; background: #dadada; }
  .hbtn { width: 10px; background: #fff; border: 1px solid #d5d5d5; display: flex; align-items: center; justify-content: center; }
  .hthumb { width: 250px; margin-left: 1px; background: #fff; border: 1px solid #c6c6c6; }
  .status { height: 16px; flex: none; border-top: 1px solid #d5d5d5; background: #f1f1f1; display: flex; align-items: center; font-size: 8px; padding: 0 0 1px 1px; color: #666; }
  .status .vsel { background: #cfcfcf; }
  .status .zm { font-size: 12px; }
  .zoomline { width: 71px; height: 9px; background: linear-gradient(#bbb, #bbb) 0 4px / 100% 1px no-repeat; display: flex; justify-content: center; }
  .zoomline i { width: 3px; height: 8px; background: #555; }
  .pct { width: 20px; white-space: nowrap; }

  .xtask { height: 26px; flex: none; display: flex; align-items: center; padding-top: 1px; background: linear-gradient(90deg, #20343f 0 60%, #1b2444 95%); color: #fff; }
  .xsearch { width: 242px; height: 26px; margin-top: -1px; padding-top: 2px; background: #f3f3f3; display: flex; color: #444; font-size: 11px; }
  .hot { background: #44565f; }
  .xtask .tiny { font-size: 8.500px; }
  .xclock { width: 54px; display: flex; flex-direction: column; align-items: center; font-size: 8.400px; line-height: 12.500px; }

  .tiles { position: absolute; left: 1117px; top: 481px; display: flex; align-items: flex-end; gap: 9px; }
  .tile { width: 113px; height: 113px; background: #004b77; border-bottom: 3px solid #42bde8; display: flex; flex-direction: column; align-items: center; padding-top: 31px; font-size: 11.500px; line-height: 16px; }
  .tile div { padding-top: 12px; }
  .tile.small { width: 57px; height: 57px; padding-top: 16px; }

  .controls { display: flex; padding: 20px 19px 0; justify-content: space-between; align-items: flex-start; }
  .controls .round { background: #202c34; box-shadow: 0 0 3px #000; }
  .controls .mid { display: flex; gap: 20px; margin-left: 52px; }
  .controls .blue { background: #00aff0; }
  .controls .red { background: #e81123; margin-left: 1px; }
  .controls .end { display: flex; gap: 21px; }

  .taskbar { height: 40px; flex: none; background: #0a0d14; display: flex; align-items: center; }
  .search { width: 344px; height: 40px; background: #f2f2f2; border-top: 1px solid #c5cbce; display: flex; align-items: center; color: #333; font-size: 14px; }
  .run { border-bottom: 2px solid #76b9ed; margin-right: 9px; }
  .run.near { margin-right: 5px; }
  .act2 { width: 48px; background: linear-gradient(90deg, #42464a 0 44px, #202327 44px 45px, #36393d 45px); margin-right: 5px; }
  .two { display: flex; flex-direction: column; align-items: center; font-size: 11.500px; line-height: 17px; }
  .lang { width: 34px; }
  .time { width: 65px; }
  .note { width: 46px; padding: 3px 0 0 4px; }
  .desk { width: 5px; height: 40px; border-left: 1px solid #5a5d62; }
</style>
